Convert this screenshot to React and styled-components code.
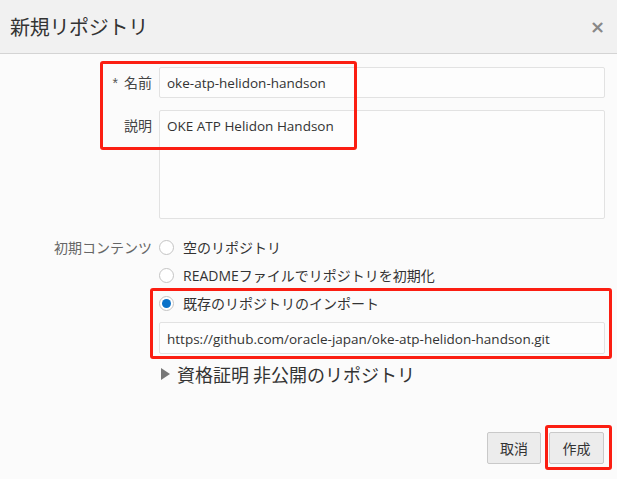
import styled, { createGlobalStyle } from 'styled-components'

const GlobalStyle = createGlobalStyle`
  html, body {
    margin: 0;
    padding: 0;
    background: #fbfbfb;
  }
  body {
    font-family: "Open Sans", "Noto Sans CJK JP", sans-serif;
    color: #333;
  }
`

const Dialog = styled.div`
  position: relative;
  width: 617px;
  height: 479px;
  background: #fbfbfb;
  display: flex;
  flex-direction: column;
  overflow: hidden;
`

const Header = styled.div`
  height: 53px;
  background: #f1f1f1;
  border-bottom: 1px solid #d4d4d4;
  display: flex;
  align-items: center;
  justify-content: space-between;
  padding: 0 12px 0 10px;
`

const Title = styled.h1`
  margin: 0;
  font-size: 20px;
  font-weight: 400;
  color: #333;
  font-family: "Noto Sans CJK JP", sans-serif;
  letter-spacing: -0.3px;
`

const Close = styled.span`
  font-size: 18px;
  font-weight: 700;
  color: #888;
  font-family: "DejaVu Sans", sans-serif;
  line-height: 1;
`

const Form = styled.div`
  display: grid;
  grid-template-columns: 152px 1fr;
  column-gap: 7px;
  padding: 13px 12px 0 0;
  align-items: start;
`

const Label = styled.label`
  text-align: right;
  font-size: 14px;
  color: ${p => (p.$muted ? '#666' : '#444')};
  line-height: ${p => p.$lh || '31px'};
  font-family: "Noto Sans CJK JP", sans-serif;
  margin-top: ${p => p.$mt || '0'};
`

const Star = styled.span`
  color: #555;
  margin-right: 6px;
  font-family: "Liberation Sans", sans-serif;
`

const TextBox = styled.div`
  box-sizing: border-box;
  height: ${p => p.$h || '31px'};
  background: #fdfdfd;
  border: 1px solid #e2e2e2;
  border-radius: 2px;
  padding: ${p => p.$pad || '6px 7px'};
  font-size: 13.5px;
  color: #333;
  margin-top: ${p => p.$mt || '0'};
  white-space: nowrap;
`

const Radios = styled.div`
  display: flex;
  flex-direction: column;
  margin-top: ${p => p.$mt};
`

const RadioRow = styled.div`
  display: flex;
  align-items: center;
  height: 20px;
  margin-bottom: 8px;
  font-size: 14px;
  color: #333;
  font-family: "Open Sans", "Noto Sans CJK JP", sans-serif;
`

const Circle = styled.span`
  box-sizing: border-box;
  width: 15px;
  height: 15px;
  border-radius: 50%;
  border: 1px solid #c4c4c4;
  background: #fff;
  margin-right: 9px;
  display: flex;
  align-items: center;
  justify-content: center;
  &::after {
    content: '';
    width: 9px;
    height: 9px;
    border-radius: 50%;
    background: ${p => (p.$on ? '#0a72c9' : 'transparent')};
  }
`

const Expander = styled.div`
  display: flex;
  align-items: center;
  margin-top: 7px;
  padding-left: 2px;
  font-size: 18px;
  color: #333;
  font-family: "Noto Sans CJK JP", sans-serif;
`

const Triangle = styled.span`
  width: 0;
  height: 0;
  border-top: 6px solid transparent;
  border-bottom: 6px solid transparent;
  border-left: 9px solid #777;
  margin-right: 7px;
`

const Footer = styled.div`
  margin-top: auto;
  display: flex;
  justify-content: flex-end;
  gap: 8px;
  padding: 0 13px 15px 0;
`

const Button = styled.button`
  box-sizing: border-box;
  height: 32px;
  min-width: ${p => p.$w};
  padding: 0 12px;
  background: #ececec;
  border: 1px solid #c9c9c9;
  border-radius: 2px;
  font-size: 14px;
  color: #333;
  font-family: "Noto Sans CJK JP", sans-serif;
`

const Mark = styled.div`
  position: absolute;
  box-sizing: border-box;
  border: 3px solid #fb1e12;
  border-radius: 3px;
  pointer-events: none;
`

export default function App() {
  return (
    <>
      <GlobalStyle />
      <Dialog>
        <Header>
          <Title>新規リポジトリ</Title>
          <Close>×</Close>
        </Header>
        <Form>
          <Label><Star>*</Star>名前</Label>
          <TextBox>oke-atp-helidon-handson</TextBox>

          <Label $mt="11px">説明</Label>
          <TextBox $h="109px" $mt="11px">OKE ATP Helidon Handson</TextBox>

          <Label $muted $lh="20px" $mt="18px">初期コンテンツ</Label>
          <div>
            <Radios $mt="18px">
              <RadioRow><Circle />空のリポジトリ</RadioRow>
              <RadioRow><Circle />READMEファイルでリポジトリを初期化</RadioRow>
              <RadioRow><Circle $on />既存のリポジトリのインポート</RadioRow>
            </Radios>
            <TextBox $h="32px" $pad="7px 7px" $mt="1px">https://github.com/oracle-japan/oke-atp-helidon-handson.git</TextBox>
            <Expander><Triangle />資格証明 非公開のリポジトリ</Expander>
          </div>
        </Form>
        <Footer>
          <Button $w="53px">取消</Button>
          <Button $w="55px">作成</Button>
        </Footer>
        <Mark style={{ left: 100, top: 61, width: 257, height: 89 }} />
        <Mark style={{ left: 150, top: 288, width: 462, height: 71 }} />
        <Mark style={{ left: 545, top: 425, width: 67, height: 45 }} />
      </Dialog>
    </>
  )
}
